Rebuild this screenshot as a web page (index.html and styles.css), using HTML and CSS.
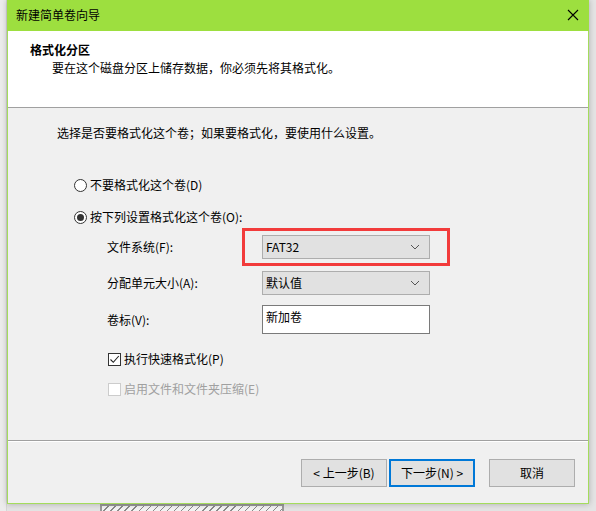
FILE: index.html
```html
<!DOCTYPE html>
<html lang="zh-CN">
<head>
<meta charset="utf-8">
<link rel="stylesheet" href="styles.css">
</head>
<body>
<div class="desk">
  <div class="behind-bar"></div>
  <div class="dialog">
    <div class="titlebar">
      <span class="title">新建简单卷向导</span>
      <svg class="close" width="12" height="12" viewBox="0 0 12 12"><path d="M1 1 L11 11 M11 1 L1 11" stroke="#000" stroke-width="1.1" fill="none"/></svg>
    </div>
    <div class="header">
      <div class="h-title">格式化分区</div>
      <div class="h-sub">要在这个磁盘分区上储存数据，你必须先将其格式化。</div>
    </div>
    <div class="content">
      <div class="row intro">选择是否要格式化这个卷；如果要格式化，要使用什么设置。</div>
      <div class="row radio-row r1"><span class="radio"></span><span>不要格式化这个卷(D)</span></div>
      <div class="row radio-row r2"><span class="radio on"></span><span>按下列设置格式化这个卷(O):</span></div>
      <div class="row field f1">
        <span class="label">文件系统(F):</span>
        <div class="select"><span>FAT32</span><svg width="10" height="6" viewBox="0 0 10 6"><path d="M1 1 L5 5 L9 1" stroke="#555" stroke-width="1" fill="none"/></svg></div>
        <div class="highlight"></div>
      </div>
      <div class="row field f2">
        <span class="label">分配单元大小(A):</span>
        <div class="select"><span>默认值</span><svg width="10" height="6" viewBox="0 0 10 6"><path d="M1 1 L5 5 L9 1" stroke="#555" stroke-width="1" fill="none"/></svg></div>
      </div>
      <div class="row field f3">
        <span class="label">卷标(V):</span>
        <div class="input">新加卷</div>
      </div>
      <div class="row check-row c1"><span class="check"><svg width="11" height="11" viewBox="0 0 11 11"><path d="M1.5 5.5 L4.3 8.3 L9.8 2" stroke="#222" stroke-width="1.1" fill="none"/></svg></span><span>执行快速格式化(P)</span></div>
      <div class="row check-row c2 disabled"><span class="check"></span><span>启用文件和文件夹压缩(E)</span></div>
    </div>
    <div class="footer">
      <button class="btn">&lt; 上一步(B)</button>
      <button class="btn default">下一步(N) &gt;</button>
      <button class="btn cancel">取消</button>
    </div>
  </div>
</div>
</body>
</html>
```
FILE: styles.css
```css
html, body {
  margin: 0;
  padding: 0;
}
body {
  width: 596px;
  height: 511px;
  overflow: hidden;
  background: #e4e4e4;
  font-family: "Noto Sans CJK SC", "Noto Sans", sans-serif;
  font-size: 12px;
  color: #000;
}
.desk {
  position: relative;
  width: 596px;
  height: 511px;
  background: linear-gradient(to right, #ececec 0, #ececec 6px, #d6d6d6 6px, #d6d6d6 7px, #e4e4e4 7px);
}
.behind-bar {
  position: absolute;
  left: 100px;
  top: 504px;
  width: 184px;
  height: 10px;
  border: 2px solid #9a9a9a;
  box-sizing: border-box;
  background: repeating-linear-gradient(135deg, #f4f4f4 0 4px, #8a8a8a 4px 5px);
}
.dialog {
  position: relative;
  margin-left: 7px;
  width: 582px;
  height: 504px;
  box-sizing: border-box;
  border: 1px solid #a4dc5c;
  border-top: none;
  background: #f0f0f0;
  display: flex;
  flex-direction: column;
  box-shadow: 0 0 6px rgba(0,0,0,0.25);
}
.titlebar {
  height: 31px;
  background: #9ddf3f;
  display: flex;
  align-items: center;
  justify-content: space-between;
  padding: 0 10px 0 8px;
  margin: 0 -1px;
}
.title {
  font-size: 12px;
  line-height: 16px;
  margin-top: -1px;
  margin-left: 1px;
}
.close {
  display: block;
  margin-top: -1px;
}
.header {
  height: 76px;
  background: #fff;
  border-bottom: 1px solid #a0a0a0;
  box-sizing: border-box;
  height: 77px;
}
.h-title {
  font-weight: 700;
  line-height: 16px;
  margin: 11px 0 0 22px;
}
.h-sub {
  line-height: 16px;
  margin: 2px 0 0 44px;
}
.content {
  height: 333px;
  border-bottom: 1px solid #a0a0a0;
  box-sizing: border-box;
  display: flex;
  flex-direction: column;
}
.row {
  display: flex;
  align-items: center;
  line-height: 16px;
}
.intro {
  margin: 17px 0 0 49px;
}
.radio-row {
  height: 16px;
}
.r1 { margin: 36px 0 0 66px; }
.r2 { margin: 16px 0 0 66px; }
.radio {
  width: 13px;
  height: 13px;
  box-sizing: border-box;
  border: 1px solid #333;
  border-radius: 50%;
  background: #fff;
  margin-right: 3px;
  display: flex;
  align-items: center;
  justify-content: center;
}
.radio.on::after {
  content: "";
  width: 7px;
  height: 7px;
  border-radius: 50%;
  background: #333;
}
.field {
  position: relative;
  margin-left: 99px;
}
.label {
  width: 155px;
}
.f1 { margin-top: 10px; }
.f2 { margin-top: 12px; }
.f3 { margin-top: 10px; }
.select {
  width: 168px;
  height: 24px;
  box-sizing: border-box;
  background: #e1e1e1;
  border: 1px solid #adadad;
  display: flex;
  align-items: center;
  justify-content: space-between;
  padding: 0 9px 0 3px;
}
.select svg { display: block; }
.input {
  width: 168px;
  height: 29px;
  box-sizing: border-box;
  background: #fff;
  border: 1px solid #7a7a7a;
  padding: 3px 3px 0;
  line-height: 16px;
}
.highlight {
  position: absolute;
  left: 135px;
  top: -7px;
  width: 208px;
  height: 38px;
  box-sizing: border-box;
  border: 3px solid #f23b3b;
}
.check-row {
  margin-left: 100px;
  height: 16px;
}
.c1 { margin-top: 17px; }
.c2 { margin-top: 14px; }
.check {
  width: 13px;
  height: 13px;
  box-sizing: border-box;
  border: 1px solid #333;
  background: #fff;
  margin-right: 3px;
  display: flex;
  align-items: center;
  justify-content: center;
}
.check svg { display: block; }
.disabled { color: #a0a0a0; }
.disabled .check { border-color: #cccccc; }
.footer {
  flex: 1;
  border-top: 1px solid #fff;
  display: flex;
  align-items: flex-start;
  padding: 17px 0 0 293px;
}
.btn {
  font-family: inherit;
  font-size: 12px;
  width: 86px;
  height: 28px;
  box-sizing: border-box;
  background: #e1e1e1;
  border: 1px solid #adadad;
  color: #000;
  padding: 0;
  margin: 0 2px 0 0;
  line-height: 16px;
}
.btn.default {
  border: 2px solid #0078d7;
}
.btn.cancel {
  margin-left: 12px;
}
```
